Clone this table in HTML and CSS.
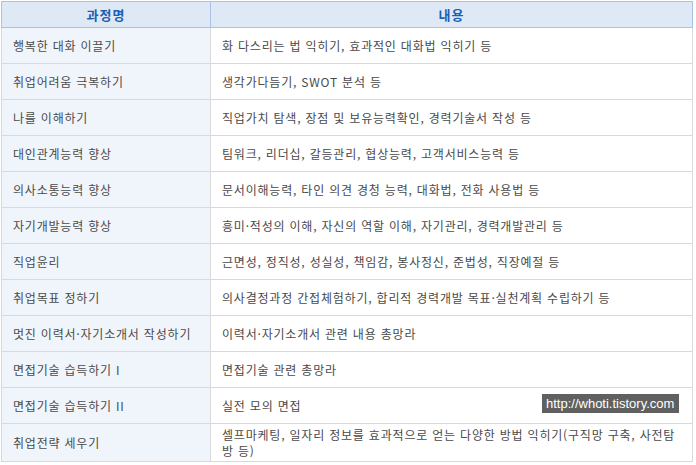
FILE: index.html
```html
<!DOCTYPE html>
<html lang="ko">

<head>
  <meta charset="UTF-8">
  <title>취업 프로그램</title>
  <link rel="stylesheet" href="styles.css">
</head>

<body>

  <div class="wrap">
    <table class="course">
      <thead>
        <tr>
          <th class="name">과정명</th>
          <th>내용</th>
        </tr>
      </thead>
      <tbody>
        <tr><td class="name">행복한 대화 이끌기</td><td>화 다스리는 법 익히기, 효과적인 대화법 익히기 등</td></tr>
        <tr><td class="name">취업어려움 극복하기</td><td>생각가다듬기, SWOT 분석 등</td></tr>
        <tr><td class="name">나를 이해하기</td><td>직업가치 탐색, 장점 및 보유능력확인, 경력기술서 작성 등</td></tr>
        <tr><td class="name">대인관계능력 향상</td><td>팀워크, 리더십, 갈등관리, 협상능력, 고객서비스능력 등</td></tr>
        <tr><td class="name">의사소통능력 향상</td><td>문서이해능력, 타인 의견 경청 능력, 대화법, 전화 사용법 등</td></tr>
        <tr><td class="name">자기개발능력 향상</td><td>흥미·적성의 이해, 자신의 역할 이해, 자기관리, 경력개발관리 등</td></tr>
        <tr><td class="name">직업윤리</td><td>근면성, 정직성, 성실성, 책임감, 봉사정신, 준법성, 직장예절 등</td></tr>
        <tr><td class="name">취업목표 정하기</td><td>의사결정과정 간접체험하기, 합리적 경력개발 목표·실천계획 수립하기 등</td></tr>
        <tr><td class="name">멋진 이력서·자기소개서 작성하기</td><td>이력서·자기소개서 관련 내용 총망라</td></tr>
        <tr><td class="name">면접기술 습득하기 I</td><td>면접기술 관련 총망라</td></tr>
        <tr><td class="name">면접기술 습득하기 II</td><td>실전 모의 면접</td></tr>
        <tr class="last"><td class="name">취업전략 세우기</td><td>셀프마케팅, 일자리 정보를 효과적으로 얻는 다양한 방법 익히기(구직망 구축, 사전탐방 등)</td></tr>
      </tbody>
    </table>

    <div class="stamp">http://whoti.tistory.com</div>
  </div>

</body>

</html>
```

FILE: styles.css
```css
body {
  margin: 0;
  background-color: #fff;
  font-family: 'Noto Sans CJK KR', 'Noto Sans', sans-serif;
  color: #4a4a4a;
}

.wrap {
  position: relative;
  width: 694px;
  padding: 1px 0 0 1px;
}

.course {
  width: 692px;
  border-collapse: collapse;
  table-layout: fixed;
  font-size: 12px;
}

.course th {
  height: 25px;
  padding: 0;
  background-color: #dfe9f5;
  border: 1px solid #a9c3e6;
  color: #1a5eb4;
  font-size: 13px;
  font-weight: bold;
  letter-spacing: 1px;
  text-align: center;
}

.course th.name {
  width: 208px;
}

.course td {
  height: 35px;
  padding: 0 8px 0 11px;
  border: 1px solid #d9d9d9;
  line-height: 16px;
  letter-spacing: 0.8px;
  vertical-align: middle;
}

.course td.name {
  background-color: #f0f5fc;
}

.course tr.last td {
  height: 37px;
}

.stamp {
  position: absolute;
  left: 542px;
  top: 394px;
  padding: 0 5px 0 4px;
  height: 19px;
  line-height: 19px;
  background-color: #606060;
  color: #fff;
  font-family: 'Liberation Sans', Arial, sans-serif;
  font-size: 13px;
}
```
